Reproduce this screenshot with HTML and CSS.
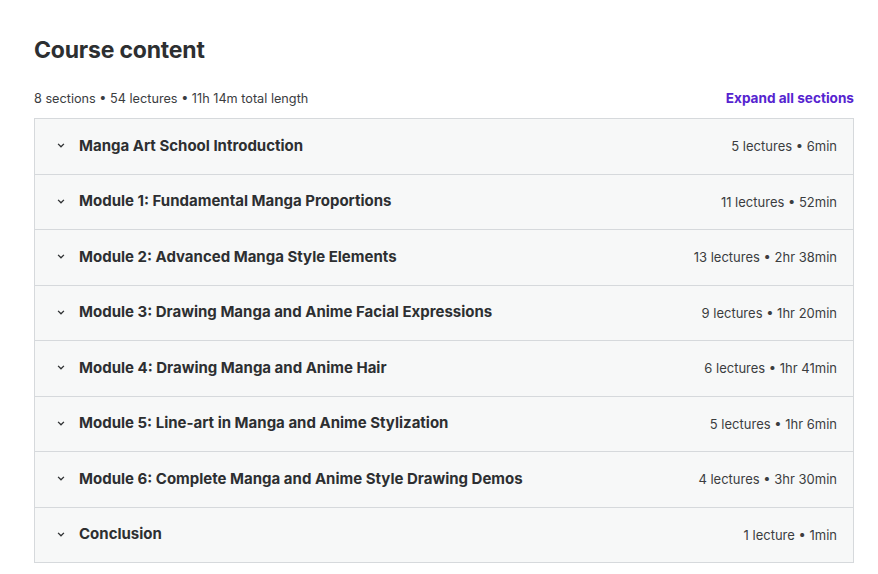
FILE: index.html
```html
<!DOCTYPE html>
<html lang="en">
<head>
    <meta charset="UTF-8">
    <title>Course content</title>
    <link rel="stylesheet" href="styles.css">
</head>
<body>

    <div class="course">
        <h2 class="title">Course content</h2>

        <div class="meta">
            <span>8 sections &bull; 54 lectures &bull; 11h 14m total length</span>
            <a class="expand" href="#">Expand all sections</a>
        </div>

        <div class="sections">
            <div class="section">
                <svg class="chev" viewBox="0 0 24 24"><path d="M7 10l5 5 5-5"/></svg>
                <span class="name">Manga Art School Introduction</span>
                <span class="info">5 lectures &bull; 6min</span>
            </div>
            <div class="section">
                <svg class="chev" viewBox="0 0 24 24"><path d="M7 10l5 5 5-5"/></svg>
                <span class="name">Module 1: Fundamental Manga Proportions</span>
                <span class="info">11 lectures &bull; 52min</span>
            </div>
            <div class="section">
                <svg class="chev" viewBox="0 0 24 24"><path d="M7 10l5 5 5-5"/></svg>
                <span class="name">Module 2: Advanced Manga Style Elements</span>
                <span class="info">13 lectures &bull; 2hr 38min</span>
            </div>
            <div class="section">
                <svg class="chev" viewBox="0 0 24 24"><path d="M7 10l5 5 5-5"/></svg>
                <span class="name">Module 3: Drawing Manga and Anime Facial Expressions</span>
                <span class="info">9 lectures &bull; 1hr 20min</span>
            </div>
            <div class="section">
                <svg class="chev" viewBox="0 0 24 24"><path d="M7 10l5 5 5-5"/></svg>
                <span class="name">Module 4: Drawing Manga and Anime Hair</span>
                <span class="info">6 lectures &bull; 1hr 41min</span>
            </div>
            <div class="section">
                <svg class="chev" viewBox="0 0 24 24"><path d="M7 10l5 5 5-5"/></svg>
                <span class="name">Module 5: Line-art in Manga and Anime Stylization</span>
                <span class="info">5 lectures &bull; 1hr 6min</span>
            </div>
            <div class="section">
                <svg class="chev" viewBox="0 0 24 24"><path d="M7 10l5 5 5-5"/></svg>
                <span class="name">Module 6: Complete Manga and Anime Style Drawing Demos</span>
                <span class="info">4 lectures &bull; 3hr 30min</span>
            </div>
            <div class="section">
                <svg class="chev" viewBox="0 0 24 24"><path d="M7 10l5 5 5-5"/></svg>
                <span class="name">Conclusion</span>
                <span class="info">1 lecture &bull; 1min</span>
            </div>
        </div>
    </div>

</body>
</html>
```

FILE: styles.css
```css
body{
    margin: 0;
    background: #fff;
    color: #2d2f31;
    font-family: Inter, "Liberation Sans", sans-serif;
}
.course{
    width: 820px;
    padding: 35px 0 0 34px;
}
.title{
    margin: 0;
    font-size: 23px;
    font-weight: 700;
    line-height: 30px;
    letter-spacing: -0.2px;
}
.meta{
    display: flex;
    justify-content: space-between;
    align-items: center;
    margin-top: 20px;
    height: 26px;
    font-size: 12.7px;
    color: #3b3d3f;
}
.expand{
    color: #5624d0;
    font-size: 13.6px;
    font-weight: 700;
    text-decoration: none;
}
.sections{
    margin-top: 7px;
    border: 1px solid #d6d9dc;
    border-bottom: none;
}
.section{
    display: flex;
    align-items: center;
    height: 54.5px;
    padding: 0 16px 0 19px;
    background: #f7f8f8;
    border-bottom: 1px solid #d6d9dc;
}
.chev{
    width: 14px;
    height: 14px;
    margin-right: 11px;
    margin-top: -2px;
    fill: none;
    stroke: #2d2f31;
    stroke-width: 2.2;
}
.name{
    flex: 1;
    font-size: 15px;
    font-weight: 700;
    margin-top: -2px;
}
.info{
    font-size: 13px;
    color: #3b3d3f;
}
```
